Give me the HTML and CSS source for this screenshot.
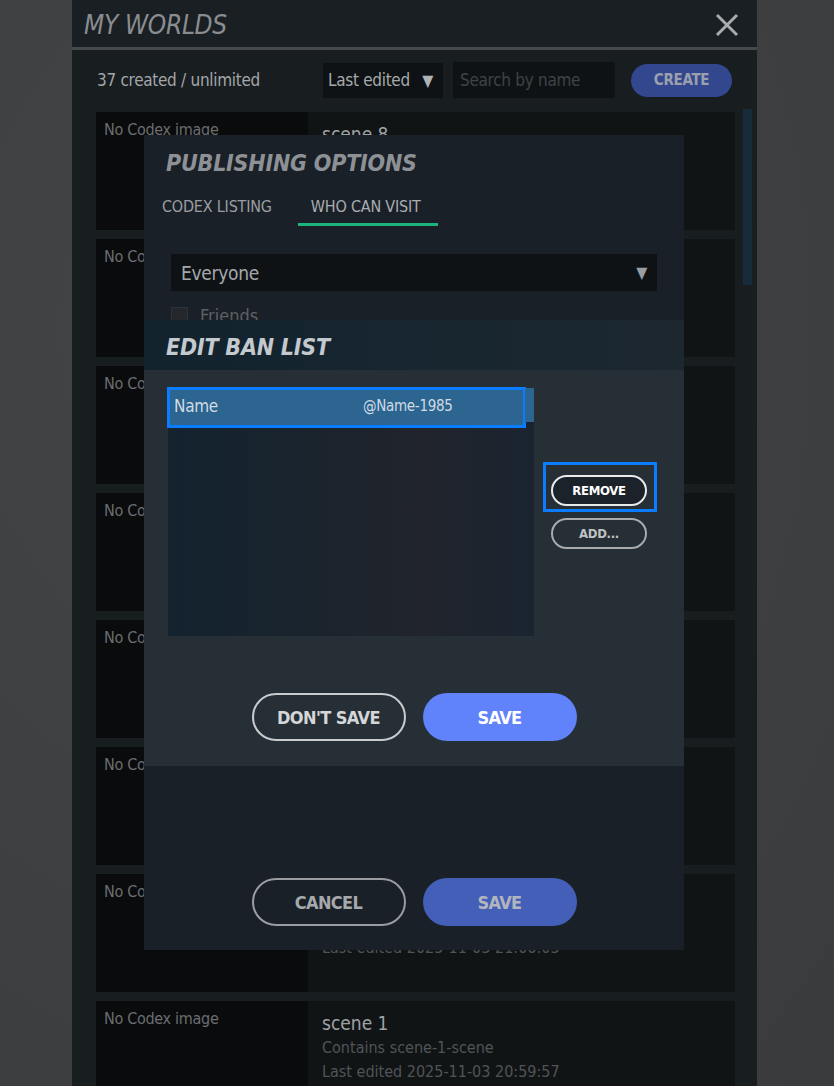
FILE: index.html
```html
<!DOCTYPE html>
<html>
<head>
<meta charset="utf-8">
<link rel="stylesheet" href="styles.css">
</head>
<body>
<div class="stage">
  <div class="panel">
    <div class="header">
      <h1 class="title">MY WORLDS</h1>
      <svg class="close" width="24" height="24" viewBox="0 0 24 24"><path d="M2 2 L22 22 M22 2 L2 22" stroke="#a9acae" stroke-width="3" fill="none"/></svg>
    </div>
    <div class="divider"></div>
    <div class="toolbar">
      <span class="count">37 created / unlimited</span>
      <div class="sort">Last edited <span class="tri">▼</span></div>
      <div class="search">Search by name</div>
      <div class="create">CREATE</div>
    </div>
    <div class="body">
      <div class="list">
        <div class="card"><div class="thumb">No Codex image</div><div class="info"><div class="name">scene 8</div></div></div>
        <div class="card"><div class="thumb">No Codex image</div><div class="info"></div></div>
        <div class="card"><div class="thumb">No Codex image</div><div class="info"></div></div>
        <div class="card"><div class="thumb">No Codex image</div><div class="info"></div></div>
        <div class="card"><div class="thumb">No Codex image</div><div class="info"></div></div>
        <div class="card"><div class="thumb">No Codex image</div><div class="info"></div></div>
        <div class="card"><div class="thumb">No Codex image</div><div class="info"><div class="name">&nbsp;</div><div class="sub">&nbsp;</div><div class="sub">Last edited 2025-11-03 21:06:05</div></div></div>
        <div class="card"><div class="thumb">No Codex image</div><div class="info"><div class="name">scene 1</div><div class="sub">Contains scene-1-scene</div><div class="sub">Last edited 2025-11-03 20:59:57</div></div></div>
      </div>
      <div class="scroll"><div class="thumbbar"></div></div>
    </div>
  </div>

  <div class="pubdlg">
    <h2 class="dtitle">PUBLISHING OPTIONS</h2>
    <div class="tabs">
      <div class="tab">CODEX LISTING</div>
      <div class="tab active">WHO CAN VISIT</div>
    </div>
    <div class="select">Everyone <span class="tri">▼</span></div>
    <div class="check"><span class="box"></span>Friends</div>
    <div class="spacer"></div>
    <div class="btnrow">
      <div class="btn outline dim">CANCEL</div>
      <div class="btn filled dim">SAVE</div>
    </div>
  </div>

  <div class="bandlg">
    <div class="banhead"><h2 class="dtitle bright">EDIT BAN LIST</h2></div>
    <div class="banbody">
      <div class="banmain">
        <div class="banlist">
          <div class="row"><span class="c1">Name</span><span class="c2">@Name-1985</span></div>
        </div>
        <div class="side">
          <div class="focus"><div class="sbtn primary">REMOVE</div></div>
          <div class="sbtn">ADD...</div>
        </div>
      </div>
      <div class="btnrow ban">
        <div class="btn outline">DON'T SAVE</div>
        <div class="btn filled bright">SAVE</div>
      </div>
    </div>
  </div>
</div>
</body>
</html>
```

FILE: styles.css
```css
* { box-sizing: border-box; }
html, body { margin: 0; padding: 0; }
body {
  width: 834px; height: 1086px; overflow: hidden;
  background: radial-gradient(ellipse at 30% 30%, #444546 0%, #3e3f40 60%, #3a3b3c 100%);
  font-family: "DejaVu Sans Condensed", "Roboto", sans-serif;
}
.stage { position: relative; width: 834px; height: 1086px; }
.panel {
  margin-left: 72px; width: 685px; height: 1086px;
  background: #181d20;
  display: flex; flex-direction: column;
}
.header {
  height: 47px; background: #1a1f23;
  display: flex; align-items: center; justify-content: space-between;
  padding: 2px 18px 0 12px;
}
.title {
  margin: 0; font-size: 26px; font-weight: normal; font-style: italic;
  color: #8a8d90; letter-spacing: -0.3px;
}
.divider { height: 3px; background: #45494d; }
.toolbar {
  height: 60px; display: flex; align-items: center;
  padding: 0 25px;
}
.count { color: #a3a6a9; font-size: 17px; width: 226px; letter-spacing: -0.3px; }
.sort {
  width: 120px; height: 35px; background: #0f1214; color: #a6a9ac;
  font-size: 17px; display: flex; align-items: center; justify-content: space-between;
  padding: 0 10px 0 5px; letter-spacing: -0.3px;
}
.sort .tri { font-size: 16px; color: #b0b3b5; }
.search {
  margin-left: 10px; width: 162px; height: 36px; background: #0f1214;
  color: #3e4347; font-size: 17px; display: flex; align-items: center; padding-left: 7px;
  letter-spacing: -0.3px;
}
.create {
  margin-left: 16px; width: 101px; height: 33px; border-radius: 17px;
  background: #33478f; color: #9aa0ad; font-weight: bold; font-size: 15px;
  display: flex; align-items: center; justify-content: center; letter-spacing: -0.3px;
}
.body { flex: 1; display: flex; padding: 2px 5px 0 24px; min-height: 0; }
.list { width: 639px; display: flex; flex-direction: column; gap: 9px; overflow: hidden; }
.card { height: 118px; flex: none; display: flex; }
.thumb {
  width: 212px; background: #0a0b0c; color: #6a6e71; font-size: 16px;
  padding: 8px 8px; letter-spacing: -0.3px;
}
.info { flex: 1; background: #111415; padding: 9px 14px; }
.name { color: #9ea2a5; font-size: 19px; line-height: 26px; }
.sub { color: #4f5457; font-size: 16px; line-height: 24px; }
.card:nth-child(7) .sub:last-child { margin-top: 3px; }
.scroll { width: 17px; padding: 0 5px 0 8px; }
.thumbbar { margin-top: -3px; width: 9px; height: 176px; background: #172c3a; }

.pubdlg {
  position: absolute; left: 144px; top: 135px; width: 540px; height: 815px;
  background: #1a2027;
  display: flex; flex-direction: column;
  padding: 15px 0 0 0;
}
.dtitle {
  margin: 0; font-size: 23px; font-style: italic; font-weight: bold;
  color: #8d9195; padding-left: 22px; letter-spacing: -0.2px;
}
.dtitle.bright { color: #c4c9ce; }
.tabs { display: flex; padding-left: 18px; margin-top: 19px; }
.tab { font-size: 16px; color: #9a9ea2; padding: 2px 0 7px 0; letter-spacing: -0.2px; }
.tab.active {
  margin-left: 26px; padding: 2px 17px 7px 13px; color: #a9adb1;
  border-bottom: 3px solid #1db37f;
}
.select {
  margin: 28px 27px 0 27px; height: 37px; background: #0e1215;
  color: #a4a8ab; font-size: 19px; display: flex; align-items: center;
  justify-content: space-between; padding: 0 10px; letter-spacing: -0.3px;
}
.select .tri { font-size: 16px; color: #9a9ea2; }
.check { margin: 14px 0 0 27px; display: flex; align-items: center; color: #5d6165; font-size: 18px; }
.check .box { width: 17px; height: 17px; background: #24282c; border: 1px solid #2e3337; margin-right: 12px; }
.spacer { flex: 1; }
.btnrow { display: flex; justify-content: center; gap: 17px; margin-bottom: 24px; }
.btn {
  width: 154px; height: 48px; border-radius: 24px;
  display: flex; align-items: center; justify-content: center;
  font-weight: bold; font-size: 18px; letter-spacing: -0.6px;
}
.btn.outline { border: 2px solid #c9cbcd; color: #d4d6d8; }
.btn.outline.dim { border-color: #9a9da0; color: #a6a9ac; }
.btn.filled { background: #6082fa; color: #ffffff; }
.btn.filled.dim { background: #445fb8; color: #b1b5bd; }

.bandlg {
  position: absolute; left: 144px; top: 320px; width: 540px; height: 446px;
  display: flex; flex-direction: column;
}
.banhead {
  height: 50px; display: flex; align-items: center; padding-top: 4px;
  background: linear-gradient(90deg, #12232e 0%, #182630 60%, #1d2730 100%);
}
.banbody { flex: 1; background: #262f36; display: flex; flex-direction: column; }
.banmain { display: flex; padding: 18px 0 0 24px; height: 323px; }
.banlist {
  width: 366px; height: 248px;
  background: linear-gradient(90deg, #13232f 0%, #1a232c 40%, #21242b 70%, #1a2430 100%);
}
.row {
  height: 39px; background: #2b6590; display: flex; align-items: center;
  outline: 3px solid #0a7cff; outline-offset: -2px;
  width: 357px; position: relative;
  font-size: 17px; color: #d0dbe4; letter-spacing: -0.3px;
  padding-left: 6px; padding-bottom: 3px;
}
.row::after {
  content: ""; position: absolute; right: -9px; top: 0; width: 9px; height: 34px; background: #2b6590;
}
.row .c1 { width: 189px; }
.row .c2 { font-size: 15px; }
.side { margin-left: 9px; display: flex; flex-direction: column; align-items: center; padding-top: 74px; }
.focus { border: 3px solid #0a7cff; padding: 10px 7px 3px 5px; }
.sbtn {
  width: 96px; height: 31px; border-radius: 16px; border: 2px solid #a9abad;
  color: #bfc1c3; font-weight: bold; font-size: 13px; letter-spacing: -0.3px;
  display: flex; align-items: center; justify-content: center;
}
.sbtn.primary { border-color: #e8eaec; color: #ffffff; background: #1b2229; }
.side > .sbtn { margin-top: 6px; margin-left: -2px; }
.btnrow.ban { margin-bottom: 0; }
```
